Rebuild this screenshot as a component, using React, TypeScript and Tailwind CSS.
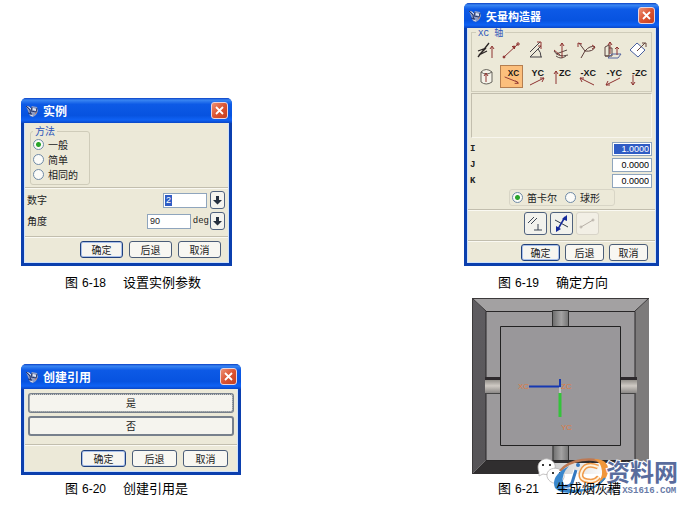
import React from 'react';

const MONO = "font-['Liberation_Mono','Noto_Sans_CJK_SC',monospace]";
const DIGITS = "font-['Liberation_Sans','Noto_Sans_CJK_SC',sans-serif]";

function TitleBar({ title, text }: { title: string; text: string }) {
  return (
    <header className="flex h-[25px] shrink-0 items-center rounded-t-[5px] bg-[linear-gradient(#0a3fc4,#3a86f2_8%,#0d5ae6_25%,#0753e0_70%,#0f62f4_88%,#0a46c6)] pl-1 pr-1">
      <svg className="h-3.5 w-3.5" viewBox="0 0 14 14" aria-hidden="true">
        <path d="M1 2h3l1 3 2-3 5 1 1 4-2 4-3 2-3-1z" fill="#8d9cc4" />
        <path d="M1 2l4 4 1 6M7 3l-1 4 5 1 1-4M3 9l4 1" fill="none" stroke="#27386d" />
        <path d="M8 4l3 1v2l-3-1z" fill="#dfe6f4" />
        <path d="M4 3l2 2M5 11l3 1" stroke="#d7dcf0" />
        <path d="M10 10l2-2" stroke="#c98265" />
      </svg>
      <h2 className={`ml-1 flex-1 font-bold leading-4 text-white ${text}`}>{title}</h2>
      <button
        type="button"
        aria-label="关闭"
        className="flex h-[17px] w-[17px] items-center justify-center rounded-[3px] border border-[#e9d4dc] bg-[linear-gradient(135deg,#ec9276,#dc5432_50%,#c33f20)]"
      >
        <svg className="h-[11px] w-[11px]" viewBox="0 0 11 11" aria-hidden="true">
          <path d="M2 2l7 7M9 2l-7 7" stroke="#fff" strokeWidth="1.8" />
        </svg>
      </button>
    </header>
  );
}

function Dialog({
  title,
  size,
  titleText = 'text-[12px]',
  children,
}: {
  title: string;
  size: string;
  titleText?: string;
  children: React.ReactNode;
}) {
  return (
    <section className={`flex flex-col rounded-t-[6px] bg-[#0b3fae] ${size}`}>
      <TitleBar title={title} text={titleText} />
      <div className="mx-[3px] mb-[3px] flex flex-1 flex-col border-x border-b border-[#cfe2fb] bg-[#ece9d8]">
        {children}
      </div>
    </section>
  );
}

function Separator() {
  return <hr className="h-0.5 border-t border-b border-t-[#c2beae] border-b-[#faf9f2]" />;
}

function Actions({ button, className }: { button: string; className: string }) {
  return (
    <div className={`flex justify-end ${className}`}>
      <button type="button" className={`h-[17px] rounded-[3px] border border-[#20407c] bg-[#f6f5f0] text-[10px] leading-3 shadow-[inset_0_0_0_1px_#a9c0ea] ${button}`}>确定</button>
      <button type="button" className={`h-[17px] rounded-[3px] border border-[#4b5d78] bg-[#f8f7f2] text-[10px] leading-3 ${button}`}>后退</button>
      <button type="button" className={`h-[17px] rounded-[3px] border border-[#4b5d78] bg-[#f8f7f2] text-[10px] leading-3 ${button}`}>取消</button>
    </div>
  );
}

function Radio({ name, label, checked }: { name: string; label: string; checked?: boolean }) {
  return (
    <label className="flex h-[15px] items-center gap-1 text-[10px] leading-3">
      <input
        type="radio"
        name={name}
        defaultChecked={checked}
        className="h-[11px] w-[11px] appearance-none rounded-full border border-[#6f8aa6] bg-[#fbfbf8] checked:bg-[radial-gradient(circle,#2ba52b_0_2px,#fbfbf8_3px)]"
      />
      {label}
    </label>
  );
}

function StepButton({ label }: { label: string }) {
  return (
    <button type="button" aria-label={label} className="flex h-[18px] w-[15px] items-center justify-center rounded-[3px] border border-[#50627e] bg-[#f4f3ee]">
      <svg className="h-2.5 w-[9px]" viewBox="0 0 9 10" aria-hidden="true">
        <path d="M3 1h3v4h3L4.500 9.500 0 5h3z" fill="#26303f" />
      </svg>
    </button>
  );
}

function Caption({ no, text, className }: { no: string; text: string; className: string }) {
  return (
    <figcaption className={`h-5 whitespace-pre text-[13px] leading-5 text-black ${className}`}>
      图<span className="px-1 font-['Liberation_Sans',sans-serif] text-[12px]">{no}</span>{`　${text}`}
    </figcaption>
  );
}

function InstanceDialog() {
  return (
    <Dialog title="实例" size="h-[168px] w-[211px]">
      <fieldset className="relative ml-[5px] mt-2 h-[54px] w-[60px] rounded-[3px] border border-[#cfccba] pl-0.5 pt-[5px]">
        <legend className="absolute -top-[8px] left-0.5 bg-[#ece9d8] px-0.5 text-[10px] leading-[14px] text-[#2b55b8]">方法</legend>
        <Radio name="method" label="一般" checked />
        <Radio name="method" label="简单" />
        <Radio name="method" label="相同的" />
      </fieldset>
      <div className="mt-[2px]"><Separator /></div>
      <div className="ml-0.5 mr-[3px] mt-[2px] flex h-[18px] items-center">
        <label htmlFor="count" className="flex-1 text-[10px] leading-3">数字</label>
        <input
          id="count"
          defaultValue="2"
          className={`mr-[3px] h-[15px] w-[44px] border border-[#8fa5bd] bg-white bg-[linear-gradient(#2f5cc4,#2f5cc4)] bg-[length:7px_11px] bg-[position:1px_1px] bg-no-repeat pl-0.5 text-[9px] leading-3 text-white ${DIGITS}`}
        />
        <StepButton label="数字选项" />
      </div>
      <div className="ml-0.5 mr-[3px] mt-[3px] flex h-[18px] items-center">
        <label htmlFor="angle" className="flex-1 text-[10px] leading-3">角度</label>
        <input id="angle" defaultValue="90" className={`h-[15px] w-[44px] border border-[#8fa5bd] bg-white pl-0.5 text-[9px] leading-3 ${DIGITS}`} />
        <span className={`w-[19px] pr-px text-right text-[9px] leading-3 ${MONO}`}>deg</span>
        <StepButton label="角度选项" />
      </div>
      <div className="mt-[6px]"><Separator /></div>
      <Actions button="w-[43px]" className="mt-[3px] gap-1.5 pr-[7px]" />
    </Dialog>
  );
}

function ReferenceDialog() {
  return (
    <Dialog title="创建引用" size="h-[111px] w-[220px]">
      <div className="mx-[3px] mt-1 flex flex-col gap-[3px]">
        <button type="button" className="h-5 rounded-[3px] border-2 border-[#77808c] bg-[#f5f4ee] text-[10px] leading-3 outline-1 -outline-offset-2 outline-dotted outline-[#c9c9c4]">是</button>
        <button type="button" className="h-5 rounded-[3px] border-2 border-[#77808c] bg-[#f5f4ee] text-[10px] leading-3">否</button>
      </div>
      <div className="mt-[8px]"><Separator /></div>
      <Actions button="w-[45px]" className="mt-[4px] gap-1.5 pr-[9px]" />
    </Dialog>
  );
}

const RED = '#8e3230';

const vectorIcons: { name: string; text?: string; end?: number; drawing: React.ReactNode }[] = [
  {
    name: '自动判断',
    drawing: (
      <>
        <path d="M3 18L14 4M3 12l8-3-7 7 8-4" stroke="#2b2524" strokeWidth="1.3" />
        <path d="M17 19V8M15 10l2-3 2 3" stroke={RED} />
      </>
    ),
  },
  {
    name: '两点',
    drawing: (
      <>
        <path d="M4 18L18 5M12 7l3 3" stroke={RED} />
        <circle cx="4" cy="18" r="1" fill={RED} stroke={RED} />
        <circle cx="14" cy="8" r="1" fill={RED} stroke={RED} />
        <path d="M16 5h4M18 3v4" stroke={RED} />
      </>
    ),
  },
  {
    name: '成一角度',
    drawing: (
      <>
        <path d="M4 13L14 3M4 18h12M4 18L15 7M12 10q3 3 3 8" stroke="#454247" />
        <path d="M11 3h4v4M12 7h3v3" stroke={RED} />
      </>
    ),
  },
  {
    name: '边/曲线矢量',
    drawing: (
      <>
        <path d="M3 12q4 7 14 4M5 17q5 4 10 0M5 15l11-4" stroke="#5a4a46" />
        <path d="M11 19V4M9 7l2-3 2 3M3 11l6 5" stroke={RED} />
      </>
    ),
  },
  {
    name: '在曲线矢量上',
    drawing: (
      <>
        <path d="M3 4l6 8-4 7M9 12q5-6 10-4-2 5-10 4" stroke="#5b3b38" />
        <path d="M2 8V4l4 1M16 6l3 2-3 2" stroke={RED} />
      </>
    ),
  },
  {
    name: '面的法向',
    drawing: (
      <>
        <path d="M3 17V8l4-2v11zM7 9h3v8H3" stroke="#5b4440" />
        <path d="M10 15h9l-3 4H6z" stroke="#5666a0" />
        <path d="M8 15V3M6 6l2-3 2 3M15 16V8M13 10l2-2 2 2" stroke={RED} />
      </>
    ),
  },
  {
    name: '平面法向',
    drawing: (
      <>
        <path d="M3 11l7-7 8 7-7 7z" fill="#fff" stroke="#4960a0" />
        <path d="M10 12l8-8M15 4h4v4" stroke="#66463f" />
      </>
    ),
  },
  {
    name: '基准轴',
    drawing: (
      <>
        <path d="M6 7v10q5 4 11 0V7q-6-5-11 0q5 4 11 0" fill="#f5f3e9" stroke="#66645c" />
        <path d="M11 17V9M9 11l2-3 2 3" stroke={RED} />
      </>
    ),
  },
  { name: 'XC 轴', text: 'XC', end: 20, drawing: <path d="M4 12l15 6M15 19h4l-3-3" stroke={RED} /> },
  { name: 'YC 轴', text: 'YC', end: 18, drawing: <path d="M4 20l14-7M14 13h4l-2 4" stroke={RED} /> },
  { name: 'ZC 轴', text: 'ZC', end: 20, drawing: <path d="M5 19V6M3 9l2-3 2 3" stroke={RED} /> },
  { name: '-XC 轴', text: '-XC', end: 20, drawing: <path d="M4 13l14 7M8 13H4l2 4" stroke={RED} /> },
  { name: '-YC 轴', text: '-YC', end: 20, drawing: <path d="M4 20l14-7M8 20H4l2-4" stroke={RED} /> },
  { name: '-ZC 轴', text: '-ZC', end: 20, drawing: <path d="M6 10v10M4 17l2 3 2-3" stroke={RED} /> },
];

function VectorDialog() {
  return (
    <Dialog title="矢量构造器" size="h-[263px] w-[195px]" titleText="text-[11px]">
      <fieldset className="relative mx-[3px] mt-1 h-[60px] border border-[#cfccba] pt-1.5">
        <legend className={`absolute -top-[5px] left-1 bg-[#ece9d8] px-0.5 text-[9px] leading-3 text-[#2b55b8] ${MONO}`}>XC 轴</legend>
        <div className="grid grid-cols-7 justify-items-center gap-y-[3px] pl-0.5">
          {vectorIcons.map((icon, i) => (
            <button
              key={icon.name}
              type="button"
              aria-label={icon.name}
              className={i === 8 ? 'h-[23px] w-[23px] border border-[#b57f50] bg-[#fcbf7c]' : 'h-[23px] w-[23px]'}
            >
              <svg className="h-full w-full overflow-visible" viewBox="0 0 23 23" fill="none" aria-hidden="true">
                {icon.drawing}
                {icon.text && (
                  <text x={icon.end} y="11" textAnchor="end" fill="#171717" className="font-['Liberation_Sans',sans-serif] text-[9px] font-bold">
                    {icon.text}
                  </text>
                )}
              </svg>
            </button>
          ))}
        </div>
      </fieldset>
      <div className="mx-[3px] mt-px h-[45px] border border-b-[#f8f6ee] border-l-[#c2beae] border-r-[#f8f6ee] border-t-[#c2beae]" />
      <div className="mt-1 flex flex-col gap-0.5 pr-[3px]">
        {['I', 'J', 'K'].map((axis, i) => (
          <div key={axis} className="flex h-3.5 items-center justify-between">
            <label htmlFor={`axis-${axis}`} className={`pl-0.5 text-[9px] font-bold leading-3 ${MONO}`}>{axis}</label>
            <input
              id={`axis-${axis}`}
              defaultValue={i === 0 ? '1.0000' : '0.0000'}
              className={`h-3.5 w-10 border border-[#8fa5bd] pr-0.5 text-right text-[9px] leading-3 ${DIGITS} ${
                i === 0 ? 'bg-[#2f5cc4] text-white shadow-[inset_0_0_0_1px_white]' : 'bg-white text-black'
              }`}
            />
          </div>
        ))}
      </div>
      <div className="ml-[41px] mt-px flex h-[17px] w-[106px] items-center gap-2 rounded-[3px] border border-[#d8d5c6] pl-0.5">
        <Radio name="coords" label="笛卡尔" checked />
        <Radio name="coords" label="球形" />
      </div>
      <div className="mt-[3px]"><Separator /></div>
      <div className="mt-px flex justify-center gap-[3px]">
        <button type="button" aria-label="平行或垂直" className="h-[23px] w-[23px] rounded-[3px] border border-[#50627e] bg-[#f2f2ed]">
          <svg viewBox="0 0 21 21" fill="none" stroke="#3d4654" aria-hidden="true">
            <path d="M3 10l6-6M6 11l6-6M9 17h8M13 17v-6" />
          </svg>
        </button>
        <button type="button" aria-label="反向" className="h-[23px] w-[23px] rounded-[3px] border border-[#50627e] bg-[#f2f2ed]">
          <svg viewBox="0 0 21 21" fill="none" aria-hidden="true">
            <path d="M4 7l13 7" stroke="#2d3949" />
            <path d="M7 16l7-12" stroke="#14299b" strokeWidth="1.500" />
            <path d="M11 6l5-4v6zM5 13l5 3-5 3z" fill="#14299b" />
          </svg>
        </button>
        <button type="button" disabled aria-label="两点方向" className="h-[23px] w-[23px] rounded-[3px] border border-[#d8d4c8] bg-[#f2efe5]">
          <svg viewBox="0 0 21 21" fill="none" stroke="#b8b1a8" aria-hidden="true">
            <path d="M4 14l12-7" />
            <circle cx="4" cy="14" r="1" />
            <circle cx="16" cy="7" r="1" />
          </svg>
        </button>
      </div>
      <div className="mt-[5px]"><Separator /></div>
      <Actions button="w-[39px]" className="mt-0.5 gap-[5px] pr-[7px]" />
    </Dialog>
  );
}

function TrayModel() {
  return (
    <svg className="h-[176px] w-[177px]" viewBox="0 0 177 176" role="img" aria-label="烟灰槽模型">
      <defs>
        <linearGradient id="left" x1="0" x2="0" y1="0" y2="1">
          <stop offset="0" stopColor="#5f5d61" />
          <stop offset="1" stopColor="#565457" />
        </linearGradient>
        <linearGradient id="tube" x1="0" x2="1" y1="0" y2="0">
          <stop offset="0" stopColor="#6b6b6b" />
          <stop offset=".55" stopColor="#a4a3a3" />
          <stop offset="1" stopColor="#747474" />
        </linearGradient>
        <linearGradient id="side" x1="0" x2="0" y1="0" y2="1">
          <stop offset="0" stopColor="#77746f" />
          <stop offset=".55" stopColor="#cfcac4" />
          <stop offset="1" stopColor="#8b8886" />
        </linearGradient>
      </defs>
      <path d="M0 0h177l-14 13H14z" fill="#a3a1a2" />
      <path d="M0 0l14 13v149L0 176z" fill="url(#left)" />
      <path d="M177 0l-14 13v149l14 14z" fill="#7d7b7b" />
      <path d="M14 162h149l14 14H0z" fill="#302e2f" />
      <path d="M0 .5h177M0 0l14 13M177 0l-14 13M.5 0v176" stroke="#3c3a3b" fill="none" />
      <path d="M14 13.500h149v149H14z" fill="#9c9a9c" stroke="#292728" />
      <path d="M80.500 12.500h16V29h-16z" fill="url(#tube)" stroke="#333" />
      <path d="M80.500 147h16v15h-16z" fill="url(#tube)" />
      <path d="M81 147v15M96.500 147v15" stroke="#333" />
      <path d="M13 79h16v16H13zM149 79h16v16h-16z" fill="url(#side)" />
      <path d="M13 79h16v3H13zM149 79h16v3h-16z" fill="#2e2a2d" />
      <path d="M14 95.500h15M149 95.500h14" stroke="#444" />
      <path d="M28.500 28.500h120v119h-120z" fill="#99979a" stroke="#222" />
      <path d="M57 88.500h31V81" fill="none" stroke="#1739b2" strokeWidth="2" />
      <path d="M88 89v6" stroke="#eee" />
      <path d="M88 95v24" stroke="#34c33b" strokeWidth="3" />
      <g fill="#df7b43" className="font-['Liberation_Sans',sans-serif] text-[8px]">
        <text x="46" y="91">XC</text>
        <text x="89" y="91">ZC</text>
        <text x="89" y="132">YC</text>
      </g>
    </svg>
  );
}

function Watermark() {
  return (
    <svg className="absolute -right-[25px] bottom-0 h-11 w-[148px]" viewBox="0 0 148 44" role="img" aria-label="资料网 ZL.XS1616.COM">
      <defs>
        <linearGradient id="fade" x1="0" x2="1" y1="0" y2="0">
          <stop offset="0" stopColor="#fff" stopOpacity="0" />
          <stop offset=".12" stopColor="#fff" stopOpacity=".75" />
          <stop offset=".6" stopColor="#fff" />
        </linearGradient>
      </defs>
      <path d="M2 9h114v14H2z" fill="url(#fade)" />
      <g fill="#fff" stroke="#b5b2b2" strokeWidth=".8">
        <path d="M2 13c0-5 5-9 10-8s8 5 7 9-6 8-12 6l-4 2v-4q-1-2-1-5z" />
        <path d="M11 20c1-5 7-7 12-5s7 8 3 12l1 3-4-1c-6 2-13-3-12-9z" />
      </g>
      <path d="M6 11h2M13 11h2M16 19h2M23 19h2" stroke="#383838" strokeWidth="2" />
      <path d="M24 17C34 5 58 2 68 10" fill="none" stroke="#bd7954" strokeWidth="2.500" />
      <path d="M33 12Q14 22 19 34q7 8 30 3-18 0-22-8-2-9 6-17z" fill="#3987cd" />
      <path d="M58 5q15 0 14 12T52 37q15-9 14-20-1-9-8-12z" fill="#f1973b" />
      <path d="M40 36q18 2 29-12" fill="none" stroke="#3987cd" strokeWidth="2" />
      <path d="M62 13q-12-5-16 4t7 10q6 1 10-4" fill="none" stroke="#f09a4a" strokeWidth="5" />
      <path d="M62 13q-12-5-16 4t7 10q6 1 10-4" fill="none" stroke="#fff3df" strokeWidth="2" />
      <path d="M40 16l-4 13q-2 4-7 3" fill="none" stroke="#fff" strokeWidth="5" />
      <path d="M40 16l-4 13q-2 4-7 3" fill="none" stroke="#3578c0" strokeWidth="3" />
      <circle cx="42" cy="11" r="2" fill="#3578c0" />
      <text x="70" y="27" fill="#596c9d" stroke="#fff" strokeWidth="2" paintOrder="stroke" className="font-['Noto_Sans_CJK_SC',sans-serif] text-[24px] font-bold">资料网</text>
      <text x="70" y="39" fill="#697ba7" className="font-['Liberation_Mono',monospace] text-[9px] font-bold">ZL.XS1616.COM</text>
    </svg>
  );
}

export default function App() {
  return (
    <main className="grid grid-cols-[auto_auto] items-end justify-between gap-y-1.5 bg-white pb-[7px] pl-[21px] pr-[25px] pt-[3px] font-['Noto_Sans_CJK_SC',sans-serif] text-[#222]">
      <figure>
        <InstanceDialog />
        <Caption no="6-18" text="设置实例参数" className="mt-1.5 pl-11" />
      </figure>
      <figure>
        <VectorDialog />
        <Caption no="6-19" text="确定方向" className="mt-1.5 pl-[34px]" />
      </figure>
      <figure>
        <ReferenceDialog />
        <Caption no="6-20" text="创建引用是" className="mt-[3px] pl-11" />
      </figure>
      <figure className="relative">
        <div className="pl-2"><TrayModel /></div>
        <Caption no="6-21" text="生成烟灰槽" className="relative z-10 mt-1 pl-[34px]" />
        <Watermark />
      </figure>
    </main>
  );
}
